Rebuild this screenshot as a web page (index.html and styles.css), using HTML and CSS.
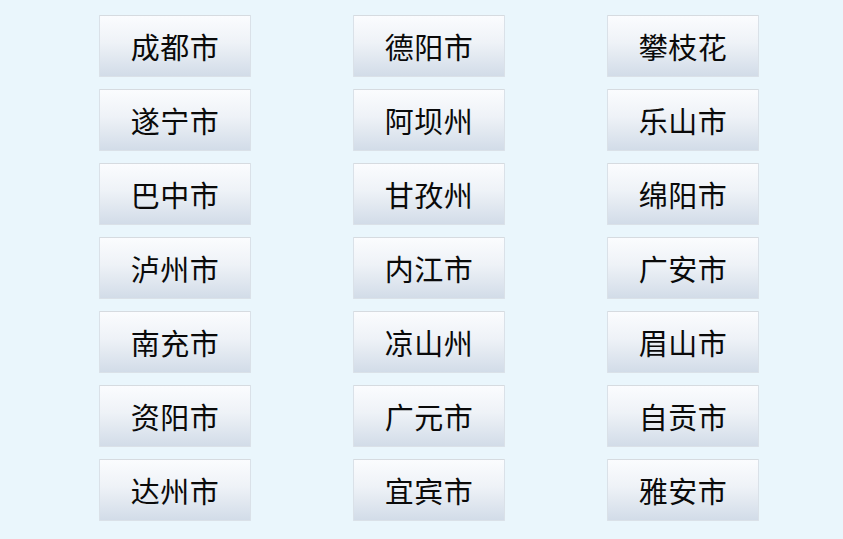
FILE: index.html
```html
<!DOCTYPE html>
<html lang="zh-CN">
<head>
  <meta charset="UTF-8">
  <meta name="viewport" content="width=device-width, initial-scale=1.0">
  <title>四川省城市</title>
  <link rel="stylesheet" href="styles.css">
</head>
<body>

  <!-- 四川省各市州 -->
  <div class="city-grid">
    <button class="city-btn">成都市</button>
    <button class="city-btn">德阳市</button>
    <button class="city-btn">攀枝花</button>
    <button class="city-btn">遂宁市</button>
    <button class="city-btn">阿坝州</button>
    <button class="city-btn">乐山市</button>
    <button class="city-btn">巴中市</button>
    <button class="city-btn">甘孜州</button>
    <button class="city-btn">绵阳市</button>
    <button class="city-btn">泸州市</button>
    <button class="city-btn">内江市</button>
    <button class="city-btn">广安市</button>
    <button class="city-btn">南充市</button>
    <button class="city-btn">凉山州</button>
    <button class="city-btn">眉山市</button>
    <button class="city-btn">资阳市</button>
    <button class="city-btn">广元市</button>
    <button class="city-btn">自贡市</button>
    <button class="city-btn">达州市</button>
    <button class="city-btn">宜宾市</button>
    <button class="city-btn">雅安市</button>
  </div>

</body>
</html>
```

FILE: styles.css
```css
:root {
  --bg: #eaf6fc;
  --btn-top: #fbfcfe;
  --btn-bottom: #d2dce8;
  --btn-border: #dae1e8;
  --text: #0a0a0a;
}

body {
  margin: 0;
  background-color: var(--bg);
  font-family: "Noto Sans CJK SC", "Noto Sans", sans-serif;
}

.city-grid {
  display: grid;
  grid-template-columns: repeat(3, 152px);
  column-gap: 102px;
  row-gap: 12px;
  padding: 15px 0 0 99px;
}

.city-btn {
  height: 62px;
  padding: 0;
  border: 1px solid var(--btn-border);
  border-top-color: #d6dbe0;
  border-radius: 1px;
  background: linear-gradient(to bottom, var(--btn-top) 0%, #eef2f7 45%, var(--btn-bottom) 100%);
  color: var(--text);
  font-family: inherit;
  font-size: 29px;
  letter-spacing: 0.5px;
  cursor: pointer;
}
```
